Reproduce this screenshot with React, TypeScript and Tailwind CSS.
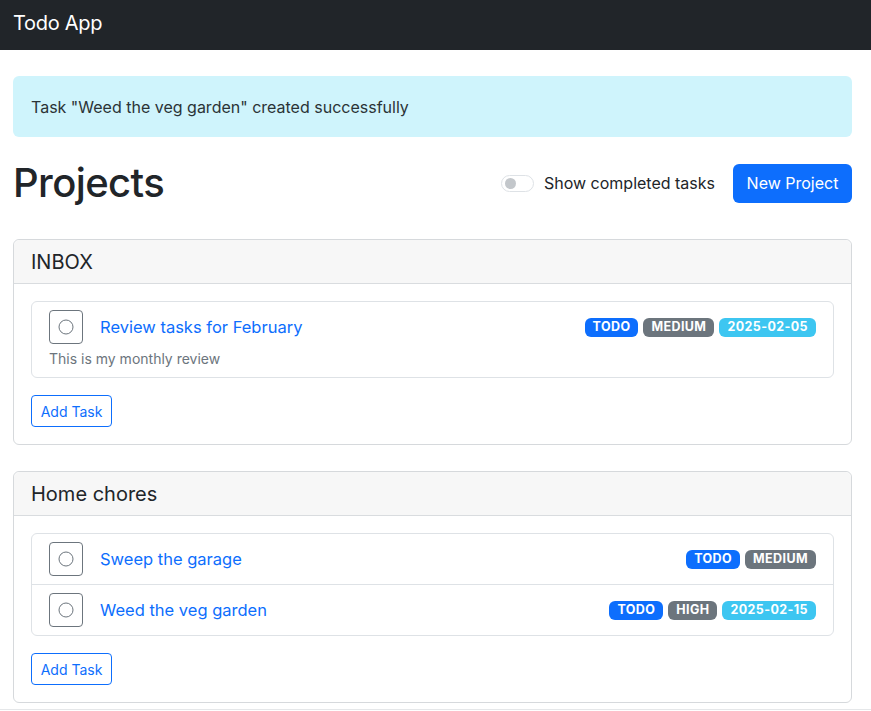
import React from "react"

type Task = {
    title: string
    description?: string
    priority: string
    due?: string
}

type Project = {
    name: string
    tasks: Task[]
}

const projects: Project[] = [
    {
        name: "INBOX",
        tasks: [
            { title: "Review tasks for February", description: "This is my monthly review", priority: "MEDIUM", due: "2025-02-05" },
        ],
    },
    {
        name: "Home chores",
        tasks: [
            { title: "Sweep the garage", priority: "MEDIUM" },
            { title: "Weed the veg garden", priority: "HIGH", due: "2025-02-15" },
        ],
    },
]

function Badge({ children, color }: { children: React.ReactNode; color: string }) {
    return (
        <span className={`${color} text-white text-[12.5px] font-bold leading-none h-[19px] px-[8px] rounded-[6px] flex items-center tracking-[0.4px]`}>
            {children}
        </span>
    )
}

function TaskRow({ task, last }: { task: Task; last: boolean }) {
    return (
        <div className={`px-[17px] py-[8px] ${last ? "" : "border-b border-[#dee2e6]"}`}>
            <div className="flex items-center">
                <button className="w-[34px] h-[34px] border border-[#6c757d] rounded-[4px] flex items-center justify-center shrink-0">
                    <svg width="16" height="16" viewBox="0 0 16 16">
                        <circle cx="8" cy="8" r="7" fill="none" stroke="#6c757d" strokeWidth="1" />
                    </svg>
                </button>
                <a href="#" className="ml-[17px] text-[#0d6efd] text-[16.5px]">{task.title}</a>
                <div className="ml-auto flex gap-[5px]">
                    <Badge color="bg-[#0d6efd]">TODO</Badge>
                    <Badge color="bg-[#6c757d]">{task.priority}</Badge>
                    {task.due && <Badge color="bg-[#3dc6f1]">{task.due}</Badge>}
                </div>
            </div>
            {task.description && (
                <p className="mt-[4px] text-[14px] leading-[21px] text-[#6c757d]">{task.description}</p>
            )}
        </div>
    )
}

function ProjectCard({ project }: { project: Project }) {
    return (
        <div className="border border-[#d6d9dc] rounded-[6px] mb-[26px]">
            <div className="h-[44px] bg-[#f7f7f7] border-b border-[#d9dcdf] px-[17px] flex items-center rounded-t-[6px]">
                <h2 className="text-[20px] text-[#212529]">{project.name}</h2>
            </div>
            <div className="p-[17px]">
                <div className="border border-[#dee2e6] rounded-[6px]">
                    {project.tasks.map((t, i) => (
                        <TaskRow key={t.title} task={t} last={i === project.tasks.length - 1} />
                    ))}
                </div>
                <button className="mt-[17px] w-[81px] h-[32px] border border-[#0d6efd] text-[#0d6efd] text-[14px] rounded-[4px] flex items-center justify-center">
                    Add Task
                </button>
            </div>
        </div>
    )
}

export default function App() {
    return (
        <div className="min-h-screen bg-white text-[#212529]" style={{ fontFamily: "Inter, 'Liberation Sans', sans-serif" }}>
            <nav className="h-[50px] bg-[#212529] px-[13px] pb-[4px] flex items-center">
                <span className="text-white text-[20px] tracking-[-0.3px]">Todo App</span>
            </nav>

            <main className="pl-[13px] pr-[19px] pt-[26px]">
                <div className="h-[61px] rounded-[6px] bg-[#cff4fc] px-[18px] flex items-center text-[16px] text-[#2b3336]">
                    Task "Weed the veg garden" created successfully
                </div>

                <div className="mt-[22px] h-[48px] flex items-center">
                    <h1 className="text-[40px] font-medium leading-[48px] tracking-[-0.6px]">Projects</h1>
                    <div className="ml-auto flex items-center">
                        <span className="w-[33px] h-[17px] rounded-full border border-[#dee2e6] flex items-center px-[3px]">
                            <span className="w-[11px] h-[11px] rounded-full bg-[#c3c7cb]" />
                        </span>
                        <span className="ml-[10px] text-[16px]">Show completed tasks</span>
                        <button className="ml-[18px] w-[119px] h-[39px] bg-[#0d6efd] text-white text-[16px] rounded-[6px]">
                            New Project
                        </button>
                    </div>
                </div>

                <div className="mt-[32px]">
                    {projects.map((p) => (
                        <ProjectCard key={p.name} project={p} />
                    ))}
                </div>
            </main>
            <div className="-mt-[20px] border-t border-[#e5e7e9]" />
        </div>
    )
}
